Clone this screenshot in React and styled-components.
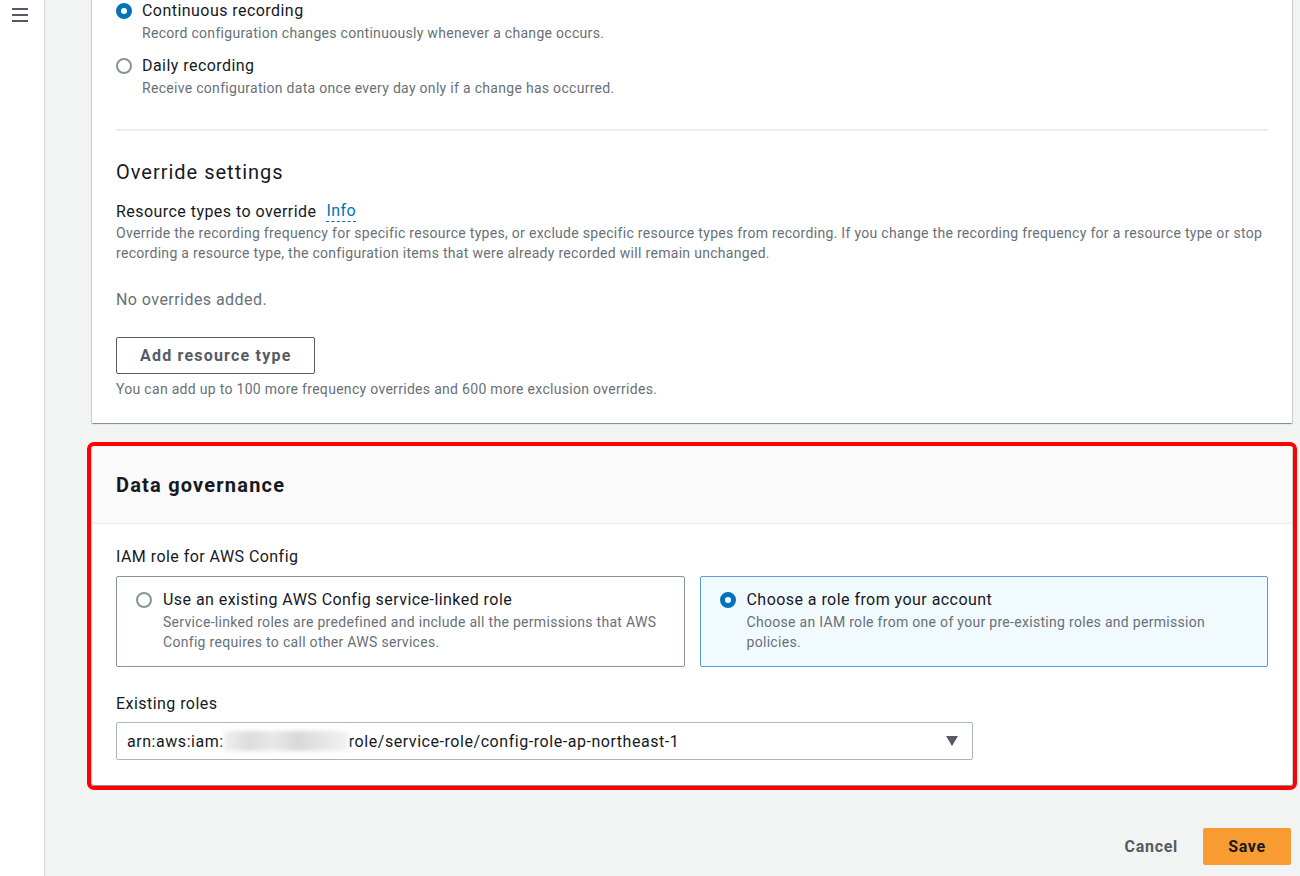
import React from "react";
import styled, { createGlobalStyle } from "styled-components";

const Global = createGlobalStyle`
  html, body { margin: 0; padding: 0; }
  body {
    background: #f2f3f3;
    font-family: Roboto, "Liberation Sans", Arial, sans-serif;
    color: #16191f;
    overflow: hidden;
  }
  * { box-sizing: border-box; }
`;

const Page = styled.div`
  display: flex;
  min-height: 876px;
  width: 1300px;
  overflow: hidden;
`;

const Sidebar = styled.nav`
  width: 45px;
  flex: none;
  background: #fff;
  border-right: 1px solid #d5dbdb;
  padding: 7px 0 0 11px;
`;

const Main = styled.main`
  flex: 1;
  padding: 0 8px 0 47px;
  display: flex;
  flex-direction: column;
  margin-top: -20px;
`;

const Card = styled.section`
  background: #fff;
  border-radius: 0 0 1px 1px;
  box-shadow: 0 1px 1px 0 rgba(0, 28, 36, 0.3), 1px 1px 1px 0 rgba(0, 28, 36, 0.15), -1px 1px 1px 0 rgba(0, 28, 36, 0.15);
  ${(p) => p.$highlight && `
    margin-top: 24px;
    outline: 4px solid #ff0000;
    outline-offset: 1px;
    border-radius: 2px;
  `}
`;

const CardBody = styled.div`
  padding: ${(p) => p.$pad || "20px 24px 24px"};
`;

const CardHeader = styled.header`
  background: #fafafa;
  border-bottom: 1px solid #eaeded;
  padding: 24px 24px 24px;
`;

const HeaderTitle = styled.h2`
  margin: 0;
  font-size: 20px;
  line-height: 28px;
  font-weight: 700;
  letter-spacing: 1.2px;
  color: #16191f;
`;

const OptionList = styled.div`
  display: flex;
  flex-direction: column;
  gap: 12px;
`;

const Option = styled.label`
  display: flex;
  align-items: flex-start;
  gap: 10px;
`;

const Radio = styled.span`
  flex: none;
  width: 16px;
  height: 16px;
  margin-top: 3px;
  border-radius: 50%;
  border: ${(p) => (p.$checked ? "5px solid #0073bb" : "2px solid #879596")};
  background: #fff;
`;

const OptionText = styled.div`
  display: flex;
  flex-direction: column;
  gap: 1px;
`;

const OptionLabel = styled.span`
  font-size: 16px;
  line-height: 22px;
  letter-spacing: 0.45px;
  color: #16191f;
`;

const Desc = styled.span`
  font-size: 14px;
  line-height: 20px;
  letter-spacing: 0.3px;
  color: #687078;
`;

const Divider = styled.hr`
  border: none;
  border-top: 2px solid #eaeded;
  margin: 31px 0 27px;
`;

const SectionTitle = styled.h3`
  margin: 0 0 15px;
  font-size: 20px;
  line-height: 28px;
  font-weight: 400;
  letter-spacing: 1px;
  color: #16191f;
`;

const FieldLabel = styled.div`
  font-size: 16px;
  line-height: 22px;
  letter-spacing: 0.45px;
  color: #16191f;
  display: flex;
  gap: 10px;
  margin-bottom: ${(p) => p.$mb || "0"};
`;

const InfoLink = styled.a`
  color: #0073bb;
  text-decoration: none;
  border-bottom: 1px dashed #0073bb;
  line-height: 20px;
  align-self: flex-start;
`;

const Empty = styled.div`
  margin: 26px 0 26px;
  font-size: 16px;
  line-height: 22px;
  letter-spacing: 0.45px;
  color: #687078;
`;

const NormalButton = styled.button`
  align-self: flex-start;
  font-family: inherit;
  height: 37px;
  padding: 0 23px;
  background: #fff;
  border: 1px solid #545b64;
  border-radius: 2px;
  font-size: 16px;
  font-weight: 700;
  letter-spacing: 1.2px;
  color: #545b64;
`;

const Stack = styled.div`
  display: flex;
  flex-direction: column;
`;

const Helper = styled.div`
  margin-top: 5px;
  font-size: 14px;
  line-height: 20px;
  letter-spacing: 0.3px;
  color: #687078;
`;

const Tiles = styled.div`
  display: grid;
  grid-template-columns: 1fr 1fr;
  gap: 15px;
  margin-bottom: 26px;
`;

const Tile = styled.label`
  display: flex;
  gap: 11px;
  align-items: flex-start;
  padding: 12px 19px 14px;
  border: 1px solid ${(p) => (p.$checked ? "#5b9bd5" : "#879596")};
  background: ${(p) => (p.$checked ? "#f1faff" : "#fff")};
  border-radius: 2px;
`;

const Select = styled.div`
  width: 857px;
  height: 38px;
  border: 1px solid #aab7b8;
  border-radius: 2px;
  display: flex;
  align-items: center;
  padding: 0 14px 0 10px;
  font-size: 16px;
  letter-spacing: 0.55px;
  color: #16191f;
`;

const SelectValue = styled.span`
  flex: 1;
  white-space: nowrap;
  display: flex;
  align-items: center;
`;

const Redacted = styled.span`
  display: inline-block;
  width: 124px;
  height: 20px;
  margin: 0 1px 0 0;
  background: linear-gradient(90deg, #f0f0f0 0%, #dcdcdc 20%, #e8e8e8 40%, #d8d8d8 60%, #e6e6e6 80%, #f2f2f2 100%);
  filter: blur(2px);
`;

const Footer = styled.div`
  display: flex;
  justify-content: flex-end;
  align-items: center;
  gap: 25px;
  margin-top: 43px;
  padding-right: 1px;
`;

const LinkButton = styled.button`
  font-family: inherit;
  background: none;
  border: none;
  padding: 0;
  font-size: 16px;
  font-weight: 700;
  letter-spacing: 0.7px;
  color: #545b64;
`;

const PrimaryButton = styled.button`
  font-family: inherit;
  height: 37px;
  width: 88px;
  background: #f89b30;
  border: none;
  border-radius: 2px;
  font-size: 16px;
  font-weight: 700;
  letter-spacing: 0.7px;
  color: #16191f;
`;

const Hamburger = () => (
  <svg width="18" height="16" viewBox="0 0 18 16">
    <path d="M1 2h16M1 8h16M1 14h16" stroke="#545b64" strokeWidth="2" />
  </svg>
);

const Caret = () => (
  <svg width="12" height="10" viewBox="0 0 12 10">
    <path d="M0 0h12L6 10z" fill="#545b64" />
  </svg>
);

export default function App() {
  return (
    <>
      <Global />
      <Page>
        <Sidebar>
          <Hamburger />
        </Sidebar>
        <Main>
          <Card>
            <CardBody>
              <OptionList>
                <Option>
                  <Radio $checked />
                  <OptionText>
                    <OptionLabel>Continuous recording</OptionLabel>
                    <Desc>Record configuration changes continuously whenever a change occurs.</Desc>
                  </OptionText>
                </Option>
                <Option>
                  <Radio />
                  <OptionText>
                    <OptionLabel>Daily recording</OptionLabel>
                    <Desc>Receive configuration data once every day only if a change has occurred.</Desc>
                  </OptionText>
                </Option>
              </OptionList>
              <Divider />
              <SectionTitle>Override settings</SectionTitle>
              <Stack>
                <FieldLabel>
                  Resource types to override <InfoLink>Info</InfoLink>
                </FieldLabel>
                <Desc>
                  Override the recording frequency for specific resource types, or exclude specific resource types from recording. If you change the recording frequency for a resource type or stop recording a resource type, the configuration items that were already recorded will remain unchanged.
                </Desc>
                <Empty>No overrides added.</Empty>
                <NormalButton>Add resource type</NormalButton>
                <Helper>You can add up to 100 more frequency overrides and 600 more exclusion overrides.</Helper>
              </Stack>
            </CardBody>
          </Card>

          <Card $highlight>
            <CardHeader>
              <HeaderTitle>Data governance</HeaderTitle>
            </CardHeader>
            <CardBody $pad="22px 24px 25px">
              <FieldLabel $mb="8px">IAM role for AWS Config</FieldLabel>
              <Tiles>
                <Tile>
                  <Radio />
                  <OptionText>
                    <OptionLabel>Use an existing AWS Config service-linked role</OptionLabel>
                    <Desc>Service-linked roles are predefined and include all the permissions that AWS Config requires to call other AWS services.</Desc>
                  </OptionText>
                </Tile>
                <Tile $checked>
                  <Radio $checked />
                  <OptionText>
                    <OptionLabel>Choose a role from your account</OptionLabel>
                    <Desc>Choose an IAM role from one of your pre-existing roles and permission policies.</Desc>
                  </OptionText>
                </Tile>
              </Tiles>
              <FieldLabel $mb="7px">Existing roles</FieldLabel>
              <Select>
                <SelectValue>
                  arn:aws:iam:<Redacted aria-label="redacted account id" />role/service-role/config-role-ap-northeast-1
                </SelectValue>
                <Caret />
              </Select>
            </CardBody>
          </Card>

          <Footer>
            <LinkButton>Cancel</LinkButton>
            <PrimaryButton>Save</PrimaryButton>
          </Footer>
        </Main>
      </Page>
    </>
  );
}
